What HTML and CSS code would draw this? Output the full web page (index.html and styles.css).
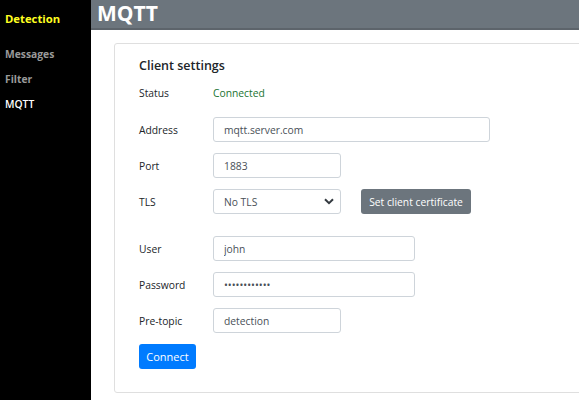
FILE: index.html
```html
<!DOCTYPE html>
<html>
<head>
<meta charset="utf-8">
<link rel="stylesheet" href="styles.css">
</head>
<body>
<div class="app">
  <nav class="sidebar">
    <div class="brand">Detection</div>
    <a class="nav-link">Messages</a>
    <a class="nav-link">Filter</a>
    <a class="nav-link active">MQTT</a>
  </nav>
  <main class="main">
    <header class="topbar">MQTT</header>
    <div class="content">
      <section class="card">
        <h2 class="card-title">Client settings</h2>
        <div class="row status-row">
          <span class="label">Status</span>
          <span class="status">Connected</span>
        </div>
        <div class="row">
          <label class="label">Address</label>
          <input class="input w-long" type="text" value="mqtt.server.com">
        </div>
        <div class="row">
          <label class="label">Port</label>
          <input class="input w-short" type="text" value="1883">
        </div>
        <div class="row group-end">
          <label class="label">TLS</label>
          <div class="select-wrap w-short">
            <select class="input select"><option>No TLS</option></select>
            <svg class="chev" width="10" height="7" viewBox="0 0 10 7"><path d="M1 1.2 L5 5.2 L9 1.2" fill="none" stroke="#343a40" stroke-width="2"/></svg>
          </div>
          <button class="btn btn-secondary">Set client certificate</button>
        </div>
        <div class="row">
          <label class="label">User</label>
          <input class="input w-mid" type="text" value="john">
        </div>
        <div class="row">
          <label class="label">Password</label>
          <input class="input w-mid" type="password" value="secretpasswd">
        </div>
        <div class="row">
          <label class="label">Pre-topic</label>
          <input class="input w-short" type="text" value="detection">
        </div>
        <div class="row">
          <button class="btn btn-primary">Connect</button>
        </div>
      </section>
    </div>
  </main>
</div>
</body>
</html>
```

FILE: styles.css
```css
html, body {
  margin: 0;
  padding: 0;
  background: #fff;
  overflow: hidden;
}
body {
  font-family: "Open Sans", "Noto Sans", sans-serif;
  font-size: 10.3px;
  color: #212529;
}
.app {
  display: flex;
  height: 400px;
}
.sidebar {
  width: 91px;
  flex: none;
  background: #000;
  display: flex;
  flex-direction: column;
  padding: 10px 0 0 5px;
  box-sizing: border-box;
}
.brand {
  color: #ffff20;
  font-weight: 700;
  font-size: 11.3px;
  line-height: 18px;
  margin-bottom: 17px;
}
.nav-link {
  color: #9a9a9a;
  font-weight: 700;
  font-size: 10.3px;
  line-height: 18px;
  margin-bottom: 7px;
}
.nav-link.active {
  color: #fff;
  font-weight: 600;
}
.main {
  flex: 1;
  min-width: 0;
  display: flex;
  flex-direction: column;
}
.topbar {
  height: 28px;
  background: #6c757d;
  border-bottom: 2px solid #5d646b;
  color: #fff;
  font-weight: 700;
  font-size: 21px;
  line-height: 27px;
  padding-left: 6px;
}
.content {
  padding: 13px 0 0 23px;
}
.card {
  width: 520px;
  height: 350px;
  box-sizing: border-box;
  border: 1px solid #dfdfdf;
  border-radius: 3px;
  padding: 13px 0 0 24px;
}
.card-title {
  margin: 0 0 5px;
  font-size: 12.5px;
  font-weight: 600;
  line-height: 18px;
  color: #212529;
}
.row {
  display: flex;
  align-items: center;
  height: 25px;
  margin-bottom: 11px;
}
.status-row {
  margin-bottom: 12px;
}
.group-end {
  margin-bottom: 22px;
}
.label {
  width: 74px;
  flex: none;
}
.status {
  color: #1a7431;
}
.input {
  box-sizing: border-box;
  height: 25px;
  border: 1px solid #ced4da;
  border-radius: 3px;
  padding: 0 10px;
  font-family: inherit;
  font-size: 10.3px;
  color: #495057;
  background: #fff;
  margin: 0;
}
.w-long { width: 277px; }
.w-mid { width: 202px; }
.w-short { width: 128px; }
.select-wrap {
  position: relative;
  height: 25px;
}
.select {
  width: 100%;
  appearance: none;
  -webkit-appearance: none;
  outline: none;
}
.chev {
  position: absolute;
  right: 7px;
  top: 9px;
}
.btn {
  box-sizing: border-box;
  height: 25px;
  border: none;
  border-radius: 3px;
  color: #fff;
  font-family: inherit;
  font-size: 10.3px;
  padding: 0;
}
.btn-secondary {
  background: #6c757d;
  width: 110px;
  margin-left: 20px;
}
.btn-primary {
  background: #007bff;
  width: 57px;
  font-size: 11px;
}
```
